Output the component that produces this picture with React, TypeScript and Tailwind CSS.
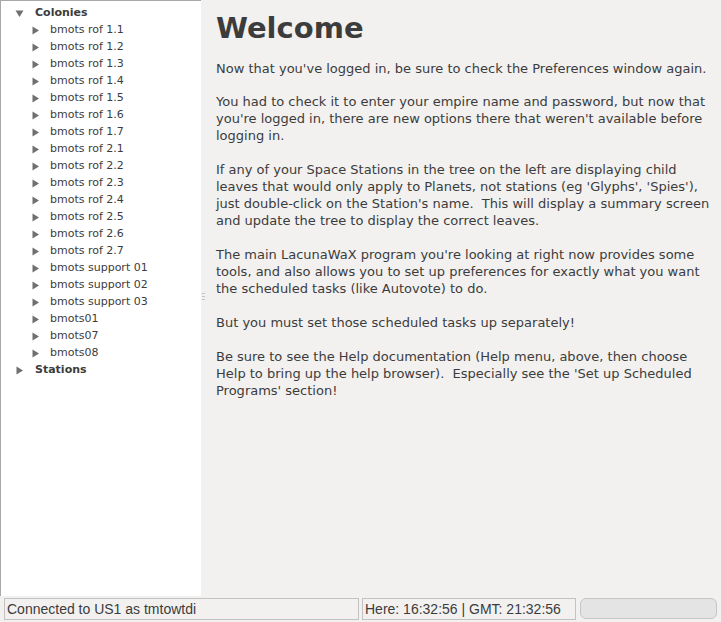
const colonies = [
  "bmots rof 1.1",
  "bmots rof 1.2",
  "bmots rof 1.3",
  "bmots rof 1.4",
  "bmots rof 1.5",
  "bmots rof 1.6",
  "bmots rof 1.7",
  "bmots rof 2.1",
  "bmots rof 2.2",
  "bmots rof 2.3",
  "bmots rof 2.4",
  "bmots rof 2.5",
  "bmots rof 2.6",
  "bmots rof 2.7",
  "bmots support 01",
  "bmots support 02",
  "bmots support 03",
  "bmots01",
  "bmots07",
  "bmots08",
]

const paragraphs = [
  "Now that you've logged in, be sure to check the Preferences window again.",
  "You had to check it to enter your empire name and password, but now that you're logged in, there are new options there that weren't available before logging in.",
  "If any of your Space Stations in the tree on the left are displaying child leaves that would only apply to Planets, not stations (eg 'Glyphs', 'Spies'), just double-click on the Station's name.  This will display a summary screen and update the tree to display the correct leaves.",
  "The main LacunaWaX program you're looking at right now provides some tools, and also allows you to set up preferences for exactly what you want the scheduled tasks (like Autovote) to do.",
  "But you must set those scheduled tasks up separately!",
  "Be sure to see the Help documentation (Help menu, above, then choose Help to bring up the help browser).  Especially see the 'Set up Scheduled Programs' section!",
]

const Expander = ({ open }: { open?: boolean }) => (
  <svg width="9" height="9" viewBox="0 0 9 9" className="shrink-0">
    {open ? (
      <polygon points="0.5,1.5 8.5,1.5 4.5,8" fill="#707070" />
    ) : (
      <polygon points="1.5,0.5 8,4.5 1.5,8.5" fill="#707070" />
    )}
  </svg>
)

const TreeRow = ({ label, depth, open, bold }: { label: string; depth: number; open?: boolean; bold?: boolean }) => (
  <div className={`flex h-[17px] items-center ${depth === 0 ? "pl-[14px]" : "pl-[30px]"}`}>
    <Expander open={open} />
    <span className={`${depth === 0 ? "ml-[11px]" : "ml-[10px]"} text-[11px] text-[#3c3c3c] ${bold ? "font-bold" : ""}`}>
      {label}
    </span>
  </div>
)

export default function App() {
  return (
    <div
      className="flex h-[622px] w-[721px] flex-col overflow-hidden bg-[#f2f1f0]"
      style={{ fontFamily: "'DejaVu Sans', sans-serif" }}
    >
      <div className="flex min-h-0 flex-1">
        {/* tree */}
        <div className="mb-[2px] w-[201px] shrink-0 border-l border-t border-[#a8a8a8] bg-white pt-[4px]">
          <TreeRow label="Colonies" depth={0} open bold />
          {colonies.map((c) => (
            <TreeRow key={c} label={c} depth={1} />
          ))}
          <TreeRow label="Stations" depth={0} bold />
        </div>

        {/* splitter grip */}
        <div className="flex w-[4px] shrink-0 flex-col items-center justify-center gap-[2px] pb-[6px]">
          <div className="h-px w-[3px] bg-[#c4c4c4]" />
          <div className="h-px w-[3px] bg-[#c4c4c4]" />
          <div className="h-px w-[3px] bg-[#c4c4c4]" />
        </div>

        {/* welcome text */}
        <div className="flex-1 pl-[11px] pr-[6px] text-[#3c3c3c]">
          <h1 className="mt-[10px] text-[29px] font-bold leading-[36px]">Welcome</h1>
          <div className="mt-[14px] flex flex-col gap-[16px] text-[13px] leading-[17px]">
            {paragraphs.map((p, i) => (
              <p key={i} className={`whitespace-pre-wrap ${i > 1 ? "mt-px" : ""}`}>
                {p}
              </p>
            ))}
          </div>
        </div>
      </div>

      {/* status bar */}
      <div
        className="flex h-[24px] shrink-0 items-start gap-[3px] px-[4px] pb-[2px] text-[14px] text-[#3c3c3c]"
        style={{ fontFamily: "'Liberation Sans', sans-serif" }}
      >
        <div className="flex h-[22px] w-[355px] items-center border border-[#c2c2c2] px-[2px]">
          Connected to US1 as tmtowtdi
        </div>
        <div className="flex h-[22px] w-[214px] items-center border border-[#c2c2c2] px-[2px]">
          Here: 16:32:56 | GMT: 21:32:56
        </div>
        <div className="ml-[1px] h-[21px] flex-1 rounded-[6px] border border-[#c6c6c6] bg-[#e4e4e4]" />
      </div>
    </div>
  )
}
